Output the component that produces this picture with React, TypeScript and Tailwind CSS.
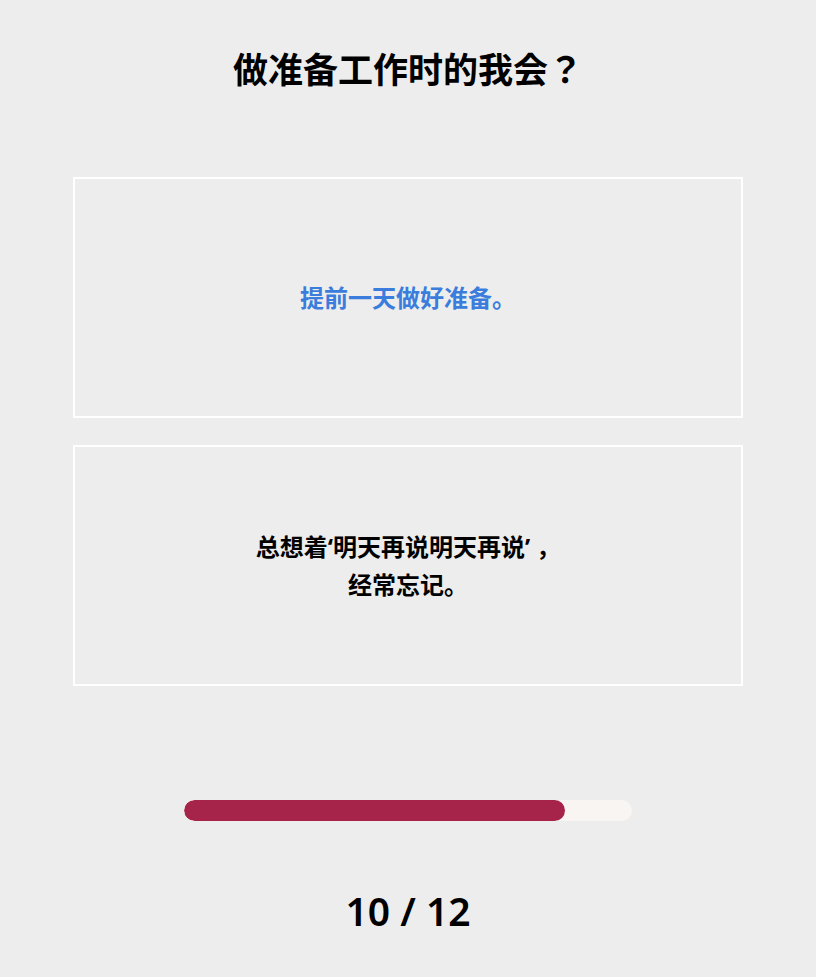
const options = [
  { id: "a", text: ["提前一天做好准备。"], active: true },
  { id: "b", text: ["总想着‘明天再说明天再说’ ，", "经常忘记。"], active: false },
];

const cjk = { fontFamily: '"Noto Sans", "Noto Sans CJK JP", sans-serif' };

export default function App() {
  const current = 10;
  const total = 12;

  return (
    <div className="min-h-[977px] w-full bg-[#ededed] flex flex-col items-center" style={cjk}>
      {/* Question */}
      <h1
        className="mt-[44px] text-[35px] leading-[48px] font-bold text-black"
        style={{ fontFamily: '"Noto Sans CJK JP", sans-serif' }}
      >
        做准备工作时的我会？
      </h1>

      {/* Options */}
      <div className="mt-[85px] w-[670px] flex flex-col gap-[27px]">
        {options.map((o) => (
          <button
            key={o.id}
            className="h-[241px] w-full border-2 border-white flex flex-col items-center justify-center"
          >
            {o.text.map((line) => (
              <span
                key={line}
                className={`text-[24px] leading-[38px] font-bold ${o.active ? "text-[#3a7ddc]" : "text-black"}`}
              >
                {line}
              </span>
            ))}
          </button>
        ))}
      </div>

      {/* Progress */}
      <div className="mt-[114px] w-[448px] h-[21px] rounded-full bg-[#f8f5f2] overflow-hidden">
        <div className="h-full rounded-full bg-[#a6234a]" style={{ width: "85%" }} />
      </div>

      <div
        className="mt-[62px] text-[39px] leading-[56px] font-semibold text-black"
        style={{ fontFamily: '"Noto Sans", sans-serif' }}
      >
        {current} / {total}
      </div>
    </div>
  );
}
